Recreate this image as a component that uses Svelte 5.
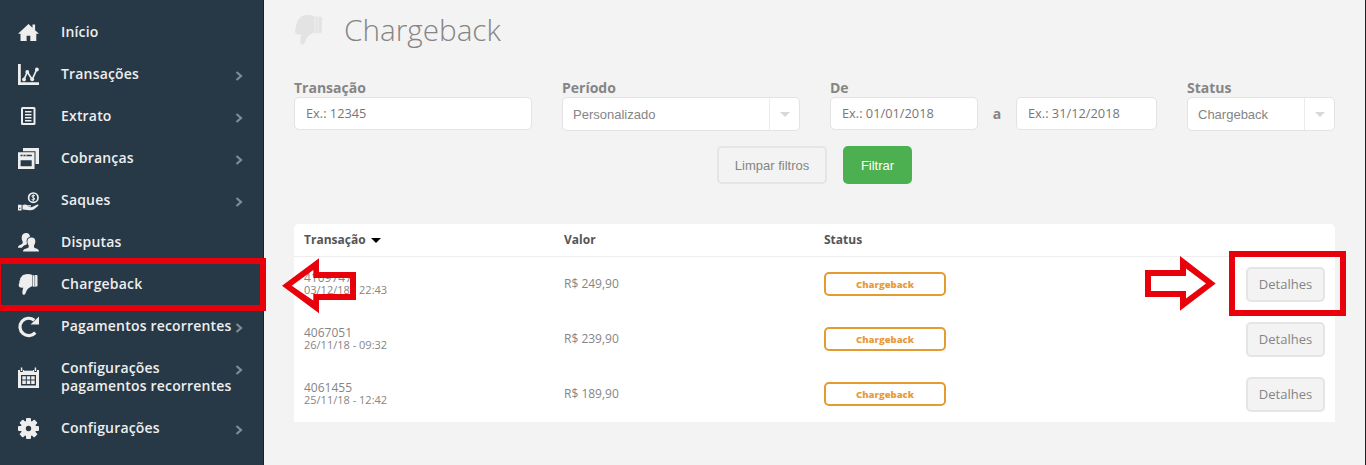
<script lang="ts">
  interface MenuItem {
    label: string
    icon: string
    arrow?: boolean
  }

  interface Chargeback {
    id: string
    date: string
    amount: string
  }

  const menu: MenuItem[] = [
    { label: 'Início', icon: 'home' },
    { label: 'Transações', icon: 'chart', arrow: true },
    { label: 'Extrato', icon: 'list', arrow: true },
    { label: 'Cobranças', icon: 'windows', arrow: true },
    { label: 'Saques', icon: 'hand', arrow: true },
    { label: 'Disputas', icon: 'people' },
    { label: 'Chargeback', icon: 'thumb' },
    { label: 'Pagamentos recorrentes', icon: 'refresh', arrow: true },
    { label: 'Configurações pagamentos recorrentes', icon: 'calendar', arrow: true },
    { label: 'Configurações', icon: 'gear', arrow: true },
  ]

  const rows: Chargeback[] = [
    { id: '4109747', date: '03/12/18 - 22:43', amount: 'R$ 249,90' },
    { id: '4067051', date: '26/11/18 - 09:32', amount: 'R$ 239,90' },
    { id: '4061455', date: '25/11/18 - 12:42', amount: 'R$ 189,90' },
  ]
</script>

{#snippet thumb()}
  <path d="M6 .7C9 -.3 11.500 -.1 14.500 1V12.300C12 13 10.500 14.200 9.200 15.700C7.800 17.500 7.700 20.800 5.800 20.800C3.900 20.800 4.100 17.500 5.300 13.500C3.300 14 .9 13.500 .7 11.500C.6 10.200 1.100 9.500 1.500 8.700C1.100 7.700 1.500 6.500 2.100 5.700C2.100 4.200 2.700 3.300 3.600 2.700C3.900 1.700 4.900 1.100 6 .7Z" />
  <path d="M15 1.200H16.600V12.700H15ZM17.100 1L18.700 1.100Q19.500 1.200 19.500 2.200V11.600Q19.500 12.400 18.700 12.500L17.100 12.700Z" />
{/snippet}

<div class="page">
  <nav class="sidebar">
    {#each menu as item}
      <a href="#menu" class="menu-item">
        <svg class="icon" viewBox="0 0 21 21" aria-hidden="true">
          {#if item.icon === 'home'}
            <path d="M10.500 2L0 11.800H2.500V19H8.600V13.800H12.300V19H18.300V11.800H21L17.100 8.200V2.500H14.500V5.700Z" />
          {:else if item.icon === 'chart'}
            <path d="M0 0H2.800V18.200H21V21H0Z" />
            <path class="line" d="M6 15.500L9.300 8L14.200 15.500L18.700 5.500" />
            <circle cx="6" cy="15.500" r="1.900" />
            <circle cx="9.300" cy="8" r="1.900" />
            <circle cx="14.200" cy="15.300" r="1.900" />
            <circle cx="18.900" cy="5.500" r="1.900" />
          {:else if item.icon === 'list'}
            <path fill-rule="evenodd" d="M4.500 1H16Q17.500 1 17.500 2.500V17.500Q17.500 19 16 19H4.500Q3 19 3 17.500V2.500Q3 1 4.500 1ZM5 3V17H15.500V3Z" />
            <path d="M7 5H13.500V6.500H7ZM7 8H13.500V9.500H7ZM7 11H13.500V12.500H7ZM7 14H13.500V15.500H7Z" />
          {:else if item.icon === 'windows'}
            <path d="M5 0H21V16H17.500V3.200H5Z" />
            <path fill-rule="evenodd" d="M0 4.200H16.500V21H0ZM2.500 6.800V8.300H13.800V6.800ZM2.600 12.300V18.200H13.700V12.300Z" />
            <path d="M4.500 6.500H5.500V8.500H4.500ZM7.500 6.500H8.500V8.500H7.500Z" />
          {:else if item.icon === 'hand'}
            <circle class="ring" cx="15.300" cy="7.700" r="4.700" />
            <path class="thin" d="M17 5.800Q15.300 4.700 14 5.800C13 8 17.500 7.200 16.700 9.300Q15.300 10.700 13.600 9.500M15.300 4.500V11" />
            <path d="M0 14.800H3.600V20.500H0ZM4.500 15C6.500 14.200 7.700 14.200 9.500 15.200H13V16.500L9 16.800L13.500 17.300L19.500 14.600Q21 14.300 20.300 15.700L15.800 19.500Q14 20.500 11.500 20.300L4.500 19.600Z" />
            <path class="hole" d="M1.300 17.700H2.300V18.900H1.300Z" />
          {:else if item.icon === 'people'}
            <path d="M7.500 1C9.800 .6 12.200 1.800 11.900 5C8.900 5.700 8.200 8.200 8.900 11C9 12 8.700 12.500 8.100 12.800C6 13.500 4.600 14.500 3.900 15.800H0C0 12.500 3.500 13 4.700 11.200V9.400C3.300 7.800 2.800 1.300 7.500 1Z" />
            <path d="M13.300 5.500C18 5.200 18.200 10.500 16 13.400V15.200C17.300 17 21 16.300 21 19.500H5C5 16.300 9.300 16.800 10.700 15.200V13.400C8.700 10.700 8.700 5.700 13.300 5.500Z" />
          {:else if item.icon === 'thumb'}
            {@render thumb()}
          {:else if item.icon === 'refresh'}
            <path class="loop" d="M17.300 16.600A8.700 8.700 0 1 1 16.300 4.300" />
            <path d="M21 .5V8.500H12.500Z" />
          {:else if item.icon === 'calendar'}
            <path fill-rule="evenodd" d="M0 3H2V4.500Q3.500 5.500 5 4.500V3H16V4.500Q17.500 5.500 19 4.500V3H21V21H0ZM3 8V18.500H18V8Z" />
            <path d="M2.800 .5H4.300V4H2.800ZM16.700 .5H18.200V4H16.700ZM4.300 9.300H7.800V12.500H4.300ZM8.800 9.300H12.200V12.500H8.800ZM13.200 9.300H16.700V12.500H13.200ZM4.300 13.600H7.800V17H4.300ZM8.800 13.600H12.200V17H8.800ZM13.200 13.600H16.700V17H13.200Z" />
            <path class="hole" d="M6 2.500H15V3.700H6Z" />
          {:else}
            {#each [0, 45, 90, 135] as angle}
              <rect x="8" y="0" width="5" height="21" rx="1" transform="rotate({angle} 10.500 10.500)" />
            {/each}
            <circle cx="10.500" cy="10.500" r="7.800" />
            <circle class="hole" cx="10.500" cy="10.500" r="2.700" />
          {/if}
        </svg>
        <span class="menu-label">{item.label}</span>
        {#if item.arrow}
          <svg class="chevron" viewBox="0 0 8 10" aria-hidden="true"><path d="M1.500 1L6 5L1.500 9" /></svg>
        {/if}
      </a>
    {/each}
  </nav>

  <main class="content">
    <header class="heading">
      <svg class="heading-icon" viewBox="0 0 21 21" aria-hidden="true">{@render thumb()}</svg>
      <h1>Chargeback</h1>
    </header>

    <form class="filters">
      <div class="fields">
        <div class="field wide">
          <label for="transaction">Transação</label>
          <input id="transaction" placeholder="Ex.: 12345" />
        </div>
        <div class="field wide">
          <span class="field-label">Período</span>
          <div class="select">
            <span>Personalizado</span>
            <i class="select-arrow"></i>
          </div>
        </div>
        <div class="field period">
          <label for="from">De</label>
          <div class="range">
            <input id="from" placeholder="Ex.: 01/01/2018" />
            <span class="until">a</span>
            <input class="to" aria-label="Até" placeholder="Ex.: 31/12/2018" />
          </div>
        </div>
        <div class="field status">
          <span class="field-label">Status</span>
          <div class="select">
            <span>Chargeback</span>
            <i class="select-arrow"></i>
          </div>
        </div>
      </div>
      <div class="actions">
        <button type="button" class="clear">Limpar filtros</button>
        <button type="button" class="submit">Filtrar</button>
      </div>
    </form>

    <section class="table">
      <div class="row head">
        <span>Transação <i class="sort"></i></span>
        <span>Valor</span>
        <span>Status</span>
      </div>
      {#each rows as row}
        <div class="row">
          <div class="transaction">
            <div class="id">{row.id}</div>
            <div class="date">{row.date}</div>
          </div>
          <span class="amount">{row.amount}</span>
          <span class="badge">Chargeback</span>
          <button type="button" class="details">Detalhes</button>
        </div>
      {/each}
    </section>
  </main>

  <!-- highlights over the menu entry and the first details button -->
  <svg class="marks" viewBox="0 0 1366 465" aria-hidden="true">
    <path d="M-5 258H266V311H-5ZM1 264V305H260V264Z" />
    <path d="M282 285.700L319 258.300V272H356V300H319V313.300ZM291.700 285.700L313.300 300.500V294H350V278H313.300V270Z" />
    <path d="M1145 270H1180V256L1215.700 283.500L1180 310.700V297H1145ZM1151 276V291H1186V298.500L1206 283.500L1186 268.500V276Z" />
    <path d="M1229 251H1346V316H1229ZM1235 257V310H1340V257Z" />
  </svg>
</div>

<style>
  :global(body) {
    margin: 0;
    background: #f3f3f3;
  }

  .page {
    position: relative;
    display: flex;
    box-sizing: border-box;
    height: 465px;
    overflow: hidden;
    border-right: 1px solid #1f2326;
    background: #f3f3f3;
    color: #858585;
    font-family: 'Open Sans', sans-serif;
  }

  .sidebar {
    box-sizing: border-box;
    width: 264px;
    flex-shrink: 0;
    padding-top: 11px;
    background: #273947;
    border-right: 1px solid #15222c;
  }

  .menu-item {
    display: flex;
    align-items: center;
    padding: 12px 18px;
    color: #eee;
    font-size: 14px;
    font-weight: 600;
    letter-spacing: 0.18px;
    line-height: 18px;
    text-decoration: none;
  }

  .icon {
    width: 21px;
    height: 21px;
    margin: -2px 22px -2px 0;
    flex-shrink: 0;
    fill: #eee;
    overflow: visible;
  }

  .icon .hole {
    fill: #273947;
  }

  .line,
  .ring,
  .thin,
  .loop {
    fill: none;
    stroke: #eee;
    stroke-width: 1.7;
  }

  .thin {
    stroke-width: 1;
  }

  .loop {
    stroke-width: 3.2;
  }

  .menu-label {
    width: 174px;
    flex-shrink: 0;
  }

  .chevron {
    width: 8px;
    height: 10px;
    align-self: flex-start;
    margin-top: 6px;
    fill: none;
    stroke: #7f8a92;
    stroke-width: 2.3;
  }

  .content {
    flex: 1;
    padding: 0 30px;
  }

  .heading {
    display: flex;
    align-items: center;
    height: 60px;
  }

  .heading-icon {
    width: 30px;
    height: 30px;
    margin-right: 20px;
    fill: #e3e3e3;
  }

  h1 {
    margin: 0;
    font-size: 29.7px;
    font-weight: 300;
    line-height: 42px;
  }

  .fields {
    display: flex;
    gap: 30px;
    height: 86px;
    padding-top: 18px;
    box-sizing: border-box;
  }

  .field {
    width: 148px;
  }

  .wide {
    width: 238px;
  }

  .period {
    width: 327px;
  }

  label,
  .field-label {
    display: block;
    height: 19px;
    font-size: 14px;
    font-weight: 700;
    line-height: 20px;
  }

  input {
    box-sizing: border-box;
    width: 100%;
    height: 33px;
    padding: 0 11px 1px;
    border: 1px solid #e3e3e3;
    border-radius: 5px;
    background: #fff;
    font: 12.8px 'Open Sans', sans-serif;
  }

  input::placeholder {
    color: #777;
  }

  .range {
    display: flex;
    align-items: center;
  }

  .range input {
    width: 148px;
  }

  .range .to {
    width: 141px;
  }

  .until {
    width: 38px;
    text-align: center;
    font-size: 14px;
    font-weight: 700;
  }

  .select {
    display: flex;
    justify-content: space-between;
    align-items: center;
    box-sizing: border-box;
    height: 34px;
    padding-left: 10px;
    border: 1px solid #e3e3e3;
    border-radius: 5px;
    background: #fff;
    font: 13px 'Liberation Sans', sans-serif;
  }

  .select-arrow {
    display: flex;
    align-items: center;
    justify-content: center;
    width: 29px;
    height: 32px;
    border-left: 1px solid #ececec;
  }

  .select-arrow::before {
    content: '';
    border: 5px solid transparent;
    border-top-color: #d8d8d8;
    border-bottom: 0;
  }

  .actions {
    display: flex;
    justify-content: center;
    gap: 16px;
  }

  button {
    box-sizing: border-box;
    padding: 0;
    border: 2px solid #e5e5e5;
    border-radius: 5px;
    background: #f3f3f3;
    color: #858585;
    font: 13px 'Liberation Sans', sans-serif;
    cursor: pointer;
  }

  .clear {
    width: 110px;
    height: 38px;
  }

  .submit {
    width: 69px;
    height: 38px;
    border: 0;
    background: #4caf50;
    color: #fff;
  }

  .table {
    margin-top: 40px;
    border-radius: 5px 5px 0 0;
    background: #fff;
  }

  .row {
    display: grid;
    grid-template-columns: 260px 260px 1fr 79px;
    align-items: center;
    box-sizing: border-box;
    height: 55px;
    padding: 0 10px 2px;
  }

  .head {
    height: 33px;
    border-bottom: 1px solid #eee;
    color: #555;
    font-size: 12px;
    font-weight: 700;
  }

  .sort {
    display: inline-block;
    margin-left: 2px;
    border: 5px solid transparent;
    border-top-color: #000;
    border-bottom: 0;
    vertical-align: 1px;
  }

  .id {
    font-size: 12px;
    line-height: 13px;
  }

  .date {
    font-size: 11px;
    line-height: 12px;
  }

  .amount {
    font-size: 12px;
  }

  .badge {
    box-sizing: border-box;
    width: 122px;
    height: 24px;
    border: 2px solid #e49b30;
    border-radius: 5px;
    color: #e89b3c;
    font-size: 9.5px;
    font-weight: 800;
    line-height: 21px;
    text-align: center;
  }

  .details {
    height: 35px;
    margin-top: 2px;
    padding-bottom: 2px;
    font: 13px 'Open Sans', sans-serif;
  }

  .marks {
    position: absolute;
    top: 0;
    left: 0;
    width: 1366px;
    height: 465px;
    fill: #e8000b;
    fill-rule: evenodd;
    pointer-events: none;
  }
</style>
